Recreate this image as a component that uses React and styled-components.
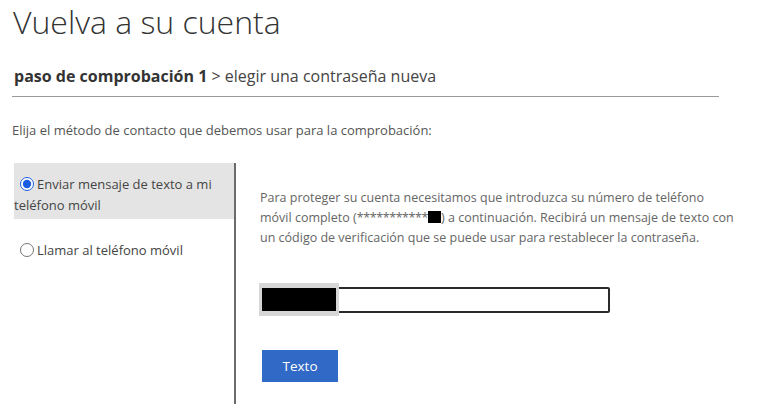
import React, { useState } from 'react';
import styled, { createGlobalStyle } from 'styled-components';

const GlobalStyle = createGlobalStyle`
  body {
    margin: 0;
    background: #fff;
    font-family: 'Open Sans', 'Noto Sans', sans-serif;
    color: #555;
  }
`;

const Page = styled.div`
  width: 762px;
  height: 412px;
  padding: 0 0 0 12px;
  box-sizing: border-box;
  overflow: hidden;
`;

const Title = styled.h1`
  margin: 0;
  padding: 0 0 0 1px;
  font-size: 32px;
  font-weight: 300;
  line-height: 44px;
  color: #333;
`;

const Steps = styled.div`
  width: 705px;
  margin-top: 20px;
  padding: 0 0 8px 2px;
  border-bottom: 1px solid #9a9a9a;
  font-size: 16px;
  line-height: 24px;
  color: #444;
`;

const Current = styled.b`
  font-weight: 700;
  color: #333;
`;

const Intro = styled.p`
  margin: 23px 0 0;
  font-size: 13px;
  line-height: 20px;
`;

const Body = styled.div`
  display: flex;
  margin-top: 23px;
  height: 241px;
`;

const Options = styled.div`
  width: 220px;
  padding-left: 2px;
  border-right: 2px solid #6b6b6b;
  display: flex;
  flex-direction: column;
  gap: 21px;
`;

const Option = styled.label`
  display: block;
  padding: ${(p) => (p.$selected ? '11px 8px 3px 0' : '0 8px 0 6px')};
  background: ${(p) => (p.$selected ? '#e4e4e4' : 'transparent')};
  font-size: 13px;
  line-height: 21px;
  color: #444;
  cursor: pointer;
`;

const Radio = styled.input`
  width: 14px;
  height: 14px;
  margin: 0 3px 0 ${(p) => (p.$indent ? '6px' : '0')};
  vertical-align: -2px;
  accent-color: #1a5de0;
`;

const Detail = styled.div`
  padding: 25px 0 0 24px;
  display: flex;
  flex-direction: column;
  align-items: flex-start;
`;

const Text = styled.p`
  margin: 0;
  width: 490px;
  font-size: 12.5px;
  line-height: 20px;
  color: #666;
`;

const Stars = styled.span`
  letter-spacing: -0.4px;
`;

const Mask = styled.span`
  display: inline-block;
  width: 13px;
  height: 12px;
  background: #000;
  vertical-align: -1px;
`;

const Field = styled.div`
  position: relative;
  margin-top: 39px;
  width: 350px;
  height: 26px;
  box-sizing: border-box;
  border: 2px solid #2b2b2b;
  border-radius: 2px;
`;

const Redact = styled.div`
  position: absolute;
  left: -3px;
  top: -6px;
  width: 80px;
  height: 33px;
  box-sizing: border-box;
  background: #000;
  border: 3px solid #d6d6d6;
  border-top-width: 5px;
  border-bottom-width: 5px;
`;

const Button = styled.button`
  margin: 37px 0 0 2px;
  width: 76px;
  height: 32px;
  border: none;
  background: #3169c6;
  color: #fff;
  font-family: inherit;
  font-size: 13.5px;
  cursor: pointer;
`;

export default function App() {
  const [method, setMethod] = useState('sms');

  return (
    <>
      <GlobalStyle />
      <Page>
        <Title>Vuelva a su cuenta</Title>
        <Steps>
          <Current>paso de comprobación 1</Current> &gt; elegir una contraseña nueva
        </Steps>
        <Intro>Elija el método de contacto que debemos usar para la comprobación:</Intro>
        <Body>
          <Options>
            <Option $selected={method === 'sms'}>
              <Radio
                type="radio"
                name="method"
                $indent
                checked={method === 'sms'}
                onChange={() => setMethod('sms')}
              />
              Enviar mensaje de texto a mi teléfono móvil
            </Option>
            <Option $selected={method === 'call'}>
              <Radio
                type="radio"
                name="method"
                checked={method === 'call'}
                onChange={() => setMethod('call')}
              />
              Llamar al teléfono móvil
            </Option>
          </Options>
          <Detail>
            <Text>
              Para proteger su cuenta necesitamos que introduzca su número de teléfono
              <br />
              móvil completo (<Stars>***********</Stars>
              <Mask />) a continuación. Recibirá un mensaje de texto con
              <br />
              un código de verificación que se puede usar para restablecer la contraseña.
            </Text>
            <Field>
              <Redact />
            </Field>
            <Button>Texto</Button>
          </Detail>
        </Body>
      </Page>
    </>
  );
}
